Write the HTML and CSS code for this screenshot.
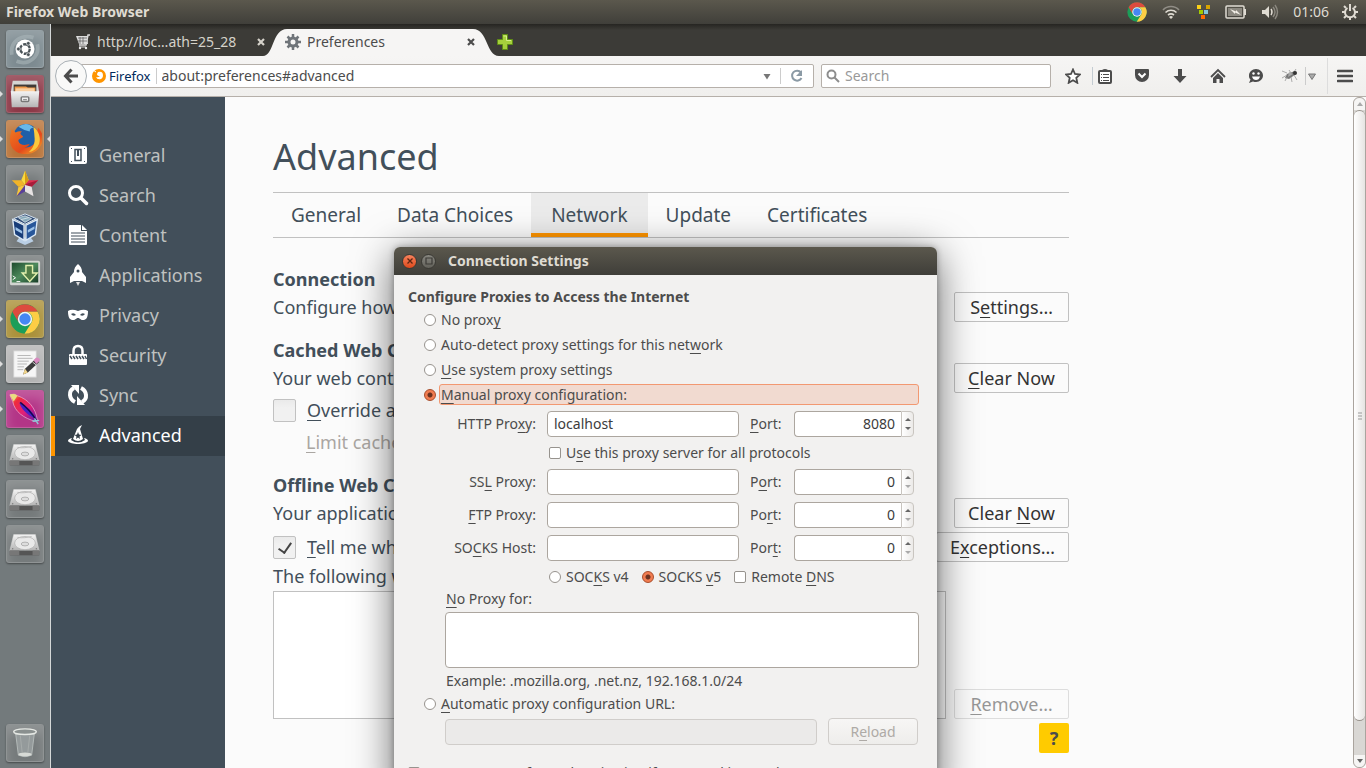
FILE: index.html
```html
<!DOCTYPE html>
<html lang="en">
<head>
<meta charset="utf-8">
<title>Preferences</title>
<link rel="stylesheet" href="styles.css">
</head>
<body>
<svg class="defs" aria-hidden="true">
  <defs>
    <linearGradient id="metal" x1="0" y1="0" x2="0" y2="1"><stop offset="0" stop-color="#f4f4f4"/><stop offset="1" stop-color="#b4b4b4"/></linearGradient>
    <linearGradient id="term" x1="0" y1="0" x2="1" y2="1"><stop offset="0" stop-color="#1d4a2c"/><stop offset=".5" stop-color="#4d8a5c"/><stop offset="1" stop-color="#173d25"/></linearGradient>
    <linearGradient id="plume" x1="0" y1="0" x2="1" y2="1"><stop offset="0" stop-color="#f0d060"/><stop offset=".25" stop-color="#ef2b3c"/><stop offset=".6" stop-color="#e0207a"/><stop offset="1" stop-color="#5a1aa8"/></linearGradient>
    <linearGradient id="foxfur" x1="0" y1="0" x2="1" y2="1"><stop offset="0" stop-color="#f07a20"/><stop offset=".6" stop-color="#e4491c"/><stop offset="1" stop-color="#f9b62b"/></linearGradient>
    <symbol id="chrome" viewBox="0 0 32 32">
      <circle cx="16" cy="16" r="15.500" fill="#1b9e59"/>
      <path d="M2.600 8.200A15.500 15.500 0 0 1 29.400 8.200H16A7.800 7.800 0 0 0 9.200 19.800z" fill="#dd4b3e"/>
      <path d="M29.400 8.200A15.500 15.500 0 0 1 15.500 31.500L22.800 19.900A7.800 7.800 0 0 0 16 8.200z" fill="#fdcd45"/>
      <circle cx="16" cy="16" r="7.600" fill="#f4f4f4"/><circle cx="16" cy="16" r="6" fill="#4587f3"/>
    </symbol>
    <symbol id="disk" viewBox="0 0 36 36">
      <path d="M6 8h23l4 17H2z" fill="url(#metal)" stroke="#d8d8d8" stroke-width=".5"/>
      <path d="M2 25h31v5H2z" fill="#555"/><path d="M2 25h10v5H2zM26 25h7v5h-7z" fill="#777"/>
      <ellipse cx="18" cy="17" rx="11" ry="7" fill="#e9e9e9" stroke="#aaa" stroke-width=".7"/>
      <ellipse cx="18" cy="18" rx="4" ry="2" fill="#ddd" stroke="#999" stroke-width=".7"/>
      <path d="M10 11c5 1 11 0 15-1" fill="none" stroke="#bbb"/>
      <circle cx="5" cy="23" r=".7" fill="#777"/><circle cx="30" cy="23" r=".7" fill="#777"/>
    </symbol>
  </defs>
</svg>
<div class="desktop">
  <header class="panel">
    <span class="panel-title">Firefox Web Browser</span>
    <div class="tray">
      <svg width="20" height="20"><use href="#chrome"/></svg>
      <svg width="20" height="16" viewBox="0 0 20 16" fill="none" stroke-width="1.600"><path d="M2 6a11 11 0 0 1 16 0" stroke="#918e86"/><path d="M4.500 8.500a8 8 0 0 1 11 0M7 11a5 5 0 0 1 6 0" stroke="#dfdbd2"/><path d="M8 13l2 2 2-2a3 3 0 0 0-4 0z" fill="#dfdbd2"/></svg>
      <svg width="16" height="16" viewBox="0 0 16 16"><path d="M2 1h4v4H2z" fill="#fcd116"/><path d="M11 1h4v4h-4z" fill="#d8a400"/><path d="M4 6h4v4H4z" fill="#a4cc00"/><path d="M9 6h4v4H9z" fill="#82c5d8"/><path d="M6 11h4v4H6z" fill="#ff6a00"/></svg>
      <svg width="22" height="14" viewBox="0 0 22 14"><rect x="1" y="1" width="18" height="12" rx="1" fill="none" stroke="#dfdbd2" stroke-width="1.500"/><path d="M3 3h14v8H3z" fill="#8b887f"/><path d="M20 4v6" stroke="#dfdbd2" stroke-width="2"/><path d="M5 4l6 2.500V5l5 5-6-2.500V9z" fill="#f2eee6"/></svg>
      <svg width="18" height="16" viewBox="0 0 18 16" fill="none"><path d="M1 6h3l4-4v12l-4-4H1z" fill="#dfdbd2"/><path d="M10 5q2 3 0 6" stroke="#dfdbd2" stroke-width="1.500"/><path d="M12 3q4 5 0 10M14 1q5 7 0 14" stroke="#8c8980" stroke-width="1.400"/></svg>
      <time class="clock">01:06</time>
      <svg width="18" height="18" viewBox="0 0 18 18" fill="none" stroke="#dfdbd2"><path d="M6.500 5a5 5 0 1 0 5 0" stroke-width="2"/><path d="M9 1v7" stroke-width="2"/><path d="M9 14v3M1 9h3M14 9h3M3 3l2 2M15 3l-2 2M3 15l2-2M15 15l-2-2" stroke-width="2"/></svg>
    </div>
  </header>

  <div class="workspace">
    <nav class="launcher" aria-label="Launcher">
      <button class="tile tile-dash" aria-label="Dash"><svg viewBox="0 0 36 36"><path d="M4 24C2 10 14 2 27 6M9 31c14 5 25-6 22-18" fill="none" stroke="#aab5b9" stroke-width="4" opacity=".6"/><circle cx="18" cy="18" r="10" fill="#fff"/><circle cx="18" cy="18" r="5" fill="none" stroke="#4a5358" stroke-width="2.500" stroke-dasharray="9 1.470"/><circle cx="11" cy="18" r="2" fill="#4a5358" stroke="#fff" stroke-width=".7"/><circle cx="21.500" cy="12" r="2" fill="#4a5358" stroke="#fff" stroke-width=".7"/><circle cx="21.500" cy="24" r="2" fill="#4a5358" stroke="#fff" stroke-width=".7"/></svg></button>
      <button class="tile tile-files running" aria-label="Files"><svg viewBox="0 0 36 36"><path d="M5 4h26l2 12H3z" fill="#d5d5d3"/><path d="M6 8h24v8H6z" fill="#3f3a36"/><path d="M7 10h12l2 1h8v6H7z" fill="#f09a4a"/><path d="M8 12h20v4H8z" fill="#fbd0a0"/><path d="M3 15h30l-1 17H4z" fill="url(#metal)"/><rect x="14" y="21" width="8" height="5" rx="1" fill="#eee" stroke="#777" stroke-width="1.500"/><path d="M16 24h4" stroke="#777"/></svg></button>
      <button class="tile tile-firefox running focused" aria-label="Firefox"><svg viewBox="0 0 36 36"><circle cx="19" cy="15" r="13" fill="#1f5fa8"/><path d="M11 5q9-6 16 1-4 0-4 4-6-1-12-5z" fill="#69b8e8"/><path d="M4 8c1 1 3 2 4 3q4-2 7-1c-3 2-2 3 1 5-1 3-5 2-5 5 1 5 8 5 12 3-2 4-6 4-6 4 9 1 13-5 12-12l3-9c6 6 6 15 2 20-3 5-9 8-15 8C9 34 2 28 2 19c0-4 1-7 2-11z" fill="url(#foxfur)"/><path d="M27 5c6 5 8 12 6 18-2 5-6 8-11 9 5-5 7-10 6-17 0-4-1-7-1-10z" fill="#fbc83c"/></svg></button>
      <button class="tile tile-gray" aria-label="Star"><svg viewBox="0 0 36 36"><path d="M18 4l4 10-4 5-4-5z" fill="#fad93c"/><path d="M18 4l4 10-4 5z" fill="#d49b15"/><path d="M32 14H22l-4 5 7 2z" fill="#e03050"/><path d="M32 14l-10 3-4 2 7 2z" fill="#a81c3a"/><path d="M27 31l-2-10-7-2v7z" fill="#e7e3e3"/><path d="M9 31l9-5v-7l-7 2z" fill="#59409a"/><path d="M4 14h10l4 5-7 2z" fill="#f1b428"/><path d="M9 31l2-10 7-2z" fill="#f6c93a"/></svg></button>
      <button class="tile tile-gray" aria-label="VirtualBox"><svg viewBox="0 0 36 36"><path d="M12 27h12l3 4-9 4-9-4z" fill="#b9cee4"/><path d="M18 2l12 5-12 6L6 7z" fill="#344f78" stroke="#dce9f5"/><path d="M11 6l7-2 7 3-7 4zM14 8l8-2" fill="#8ab" stroke="#fff" stroke-width=".6"/><path d="M5 8l12 6v16L7 24z" fill="#183d78" stroke="#dce9f5" stroke-width="1.500"/><path d="M31 8l-12 6v16l10-6z" fill="#28579a" stroke="#dce9f5" stroke-width="1.500"/><path d="M8 16l7 4v3l-7-4zM21 19l7-4v3l-7 4z" fill="#9ec4e9"/></svg></button>
      <button class="tile tile-gray" aria-label="Terminal"><svg viewBox="0 0 36 36"><rect x="2" y="4" width="32" height="26" rx="2" fill="#d2d4d0"/><path d="M4 6h28v21H4z" fill="url(#term)"/><path d="M5 20l3 2-3 2M9 26h4" fill="none" stroke="#fff"/><path d="M19 9h7v8h5l-8 9-8-9h4z" fill="#527d46" stroke="#e3f0ae" stroke-width="1.500"/></svg></button>
      <button class="tile tile-chrome running" aria-label="Chrome"><svg viewBox="0 0 36 36"><use href="#chrome" x="2" y="2" width="32" height="32"/></svg></button>
      <button class="tile tile-edit running" aria-label="Text Editor"><svg viewBox="0 0 36 36"><path d="M6 4h24v28H6z" fill="#f6f6f6" stroke="#ccc"/><path d="M10 9h14M10 12h16M10 15h12M10 18h10M10 21h7M10 24h6" stroke="#b5b5b5"/><path d="M16 29l2-6L30 12l3 4-12 11z" fill="#3c3c3c"/><path d="M27 14l3-3q3 0 4 3l-4 4z" fill="#d98ac0"/><path d="M16 29l2-6 3 4z" fill="#f1d58b"/><path d="M26 16l4 3" stroke="#ddd"/></svg></button>
      <button class="tile tile-feather running" aria-label="Feather"><svg viewBox="0 0 36 36"><path d="M2 3q5-2 8 1c12 4 19 13 21 25l-2 2C17 28 7 21 5 10z" fill="url(#plume)" stroke="#f2b9d8" stroke-width=".7"/><path d="M12 11c8 4 14 9 17 17C20 24 14 18 12 11z" fill="#4520c8"/><path d="M13 11c8 6 12 11 17 19" fill="none" stroke="#16064c" stroke-width="1.500"/><path d="M2 3q5-2 8 1l-4 6z" fill="#e9dc80"/><path d="M28 28l4 6M26 31l7-1" stroke="#8fc8d8" stroke-width="1.500"/></svg></button>
      <button class="tile tile-gray" aria-label="Volume 1"><svg><use href="#disk"/></svg></button>
      <button class="tile tile-gray" aria-label="Volume 2"><svg><use href="#disk"/></svg></button>
      <button class="tile tile-gray" aria-label="Volume 3"><svg><use href="#disk"/></svg></button>
      <button class="tile tile-gray tile-trash" aria-label="Trash"><svg viewBox="0 0 36 36"><path d="M8 7h20l-3 24q-7 3-14 0z" fill="#949a9b" stroke="#b5bbba"/><path d="M13 10l2 18M23 10l-2 18" stroke="#a7acab"/><ellipse cx="18" cy="30" rx="7" ry="2" fill="#d7dad6"/><ellipse cx="18" cy="6" rx="12" ry="3" fill="#8a908f" stroke="#e5e8e4" stroke-width="1.500"/></svg></button>
    </nav>

    <div class="browser">
      <div class="tabstrip">
        <div class="tab">
          <svg width="16" height="16" viewBox="0 0 16 16"><path d="M1 2h11l1 8H4z" fill="#ddd"/><path d="M15 1l-2 0-2 10H4" fill="none" stroke="#ddd" stroke-width="1.500"/><path d="M3 4h9M3 7h9M5 3v7M8 3v7" stroke="#555" stroke-width=".7"/><path d="M4 13h7" stroke="#ddd"/><circle cx="5" cy="14" r="1.200" fill="#eee"/><circle cx="11" cy="14" r="1.200" fill="#eee"/></svg>
          <span class="tab-label">http://loc…ath=25_28</span>
          <button class="tab-close" aria-label="Close tab"><svg width="8" height="8" viewBox="0 0 8 8"><path d="M1 1l6 6M7 1L1 7" stroke="currentColor" stroke-width="2.200"/></svg></button>
        </div>
        <div class="tab tab-active">
          <svg class="tab-shape" viewBox="0 0 236 29" preserveAspectRatio="none"><path d="M0 29C11 29 9 1 24 1H210C225 1 223 29 236 29z" fill="#f6f5f4"/></svg>
          <svg width="16" height="16" viewBox="0 0 16 16"><circle cx="8" cy="8" r="4" fill="none" stroke="#6f7479" stroke-width="3"/><path d="M8 0v3M8 13v3M0 8h3M13 8h3M2.500 2.500l2 2M11.500 11.500l2 2M13.500 2.500l-2 2M4.500 11.500l-2 2" stroke="#6f7479" stroke-width="2.500"/></svg>
          <span class="tab-label">Preferences</span>
          <button class="tab-close" aria-label="Close tab"><svg width="8" height="8" viewBox="0 0 8 8"><path d="M1 1l6 6M7 1L1 7" stroke="currentColor" stroke-width="2.200"/></svg></button>
        </div>
        <button class="new-tab" aria-label="New tab"><svg width="16" height="16" viewBox="0 0 16 16"><path d="M5.500 .5h5v5h5v5h-5v5h-5v-5h-5v-5h5z" fill="#a6d03c" stroke="#5f8d16"/><path d="M6.500 2h3v4.500H14" fill="none" stroke="#d5ef8a"/></svg></button>
      </div>

      <div class="toolbar">
        <button class="back" aria-label="Back"><svg width="16" height="16" viewBox="0 0 16 16" fill="none" stroke="#4c4c4c" stroke-width="3"><path d="M8.500 1.500L2.500 8l6 6.500M3 8h12"/></svg></button>
        <div class="urlbar">
          <svg width="14" height="14" viewBox="0 0 14 14"><circle cx="7" cy="7" r="7" fill="#ff9500"/><path d="M6 3q3-1 4.500 1Q12 8 9 10q-4 1-5-2 2 1 4-1-3 0-3-2z" fill="#fff"/><path d="M1 1l3 2" stroke="#fff"/></svg>
          <span class="identity">Firefox</span>
          <input class="url" type="text" aria-label="Address" value="about:preferences#advanced">
          <button class="icon-button url-drop" aria-label="Show history"><svg width="8" height="7" viewBox="0 0 8 7"><path d="M.5 1h7L4 6.500z" fill="#777"/></svg></button>
          <button class="icon-button reload" aria-label="Reload page"><svg width="14" height="14" viewBox="0 0 14 14"><path d="M11 3.500A5 5 0 1 0 11.500 9" fill="none" stroke="#8b9aa5" stroke-width="2"/><path d="M12 1v6H6z" fill="#8b9aa5"/></svg></button>
        </div>
        <label class="searchbar">
          <svg width="14" height="14" viewBox="0 0 14 14" fill="none" stroke="#8d8d8d" stroke-width="2"><circle cx="5.500" cy="5.500" r="4"/><path d="M8.500 8.500L13 13"/></svg>
          <input type="text" placeholder="Search" aria-label="Search the web">
        </label>
        <div class="actions">
          <button class="icon-button" aria-label="Bookmark"><svg width="16" height="16" viewBox="0 0 16 16"><path d="M8 1.500l2 4.500 5 .5-3.700 3.300 1 5L8 12.300l-4.300 2.500 1-5L1 6.500 6 6z" fill="#fff" stroke="#4c4c4c" stroke-width="1.800"/></svg></button>
          <button class="icon-button list" aria-label="Bookmarks list"><svg width="14" height="16" viewBox="0 0 14 16"><rect x="1" y="3" width="12" height="12" rx="1" fill="#fff" stroke="#4c4c4c" stroke-width="2"/><path d="M4 3q0-2 3-2t3 2v1H4z" fill="#4c4c4c"/><path d="M3 6.500h1M5 6.500h6M3 9.500h1M5 9.500h6M3 12.500h1M5 12.500h6" stroke="#4c4c4c"/></svg></button>
          <button class="icon-button" aria-label="Pocket"><svg width="16" height="16" viewBox="0 0 16 16"><path d="M2 1h12q1 0 1 1v5a7 7 0 0 1-14 0V2q0-1 1-1z" fill="#4c4c4c"/><path d="M4.500 5.500L8 9l3.500-3.500" fill="none" stroke="#fff" stroke-width="2"/></svg></button>
          <button class="icon-button" aria-label="Downloads"><svg width="14" height="16" viewBox="0 0 14 16"><path d="M5 1h4v7h4.500L7 15 .5 8H5z" fill="#4c4c4c"/></svg></button>
          <button class="icon-button" aria-label="Home"><svg width="16" height="16" viewBox="0 0 16 16"><path d="M1 9l7-7 7 7" fill="none" stroke="#4c4c4c" stroke-width="1.800"/><path d="M3 10l5-5 5 5v5H9.500v-4h-3v4H3z" fill="#4c4c4c"/></svg></button>
          <button class="icon-button" aria-label="Chat"><svg width="16" height="16" viewBox="0 0 16 16"><path d="M8 1c4 0 7 3 7 6.500S12 14 8 14c-1 0-2 0-3-.5L1 15l1.500-3.500C1 10 1 9 1 7.500 1 4 4 1 8 1z" fill="#4c4c4c"/><circle cx="5.500" cy="5.500" r="1.200" fill="#fff"/><circle cx="10.500" cy="5.500" r="1.200" fill="#fff"/><path d="M4 8.500h8q-1 3.500-4 3.500T4 8.500z" fill="#fff"/></svg></button>
          <button class="icon-button fly" aria-label="Firebug"><svg width="16" height="14" viewBox="0 0 16 14"><path d="M5 5l8-3 1 3-7 5-4-1z" fill="#777"/><path d="M5 4L0 2M5 6L0 9M5 8L3 12M9 8l1 5M12 6l3 5M9 4L7 1M12 3l2-3" stroke="#999" stroke-width=".8"/><path d="M7 3l4 2-5 3z" fill="#aaa"/><circle cx="13" cy="4" r="2" fill="#333"/></svg></button>
          <button class="icon-button fly-drop" aria-label="Firebug options"><svg width="8" height="7" viewBox="0 0 8 7"><path d="M.5 1h7L4 6.500z" fill="#aaa" stroke="#777"/></svg></button>
          <button class="icon-button menu" aria-label="Menu"><svg width="16" height="14" viewBox="0 0 16 14"><path d="M1 2h14M1 7h14M1 12h14" stroke="#4c4c4c" stroke-width="2.600" stroke-linecap="round"/></svg></button>
        </div>
      </div>

      <div class="page">
        <nav class="sidebar" aria-label="Categories">
          <a href="#general"><svg viewBox="0 0 20 20"><rect x="1" y="1" width="18" height="18" rx="2" fill="#fff"/><path d="M7 4.500h6v11H7z" fill="none" stroke="#424f5a" stroke-width="1.500"/><path d="M9 5h2v6H9z" fill="#424f5a"/><path d="M3 3h1v1H3zM16 3h1v1h-1zM3 16h1v1H3zM16 16h1v1h-1z" fill="#424f5a"/></svg>General</a>
          <a href="#search"><svg viewBox="0 0 20 20" fill="none" stroke="#fff"><circle cx="8" cy="8" r="6.500" stroke-width="3"/><path d="M13 13l5.500 5.500" stroke-width="3.500" stroke-linecap="round"/></svg>Search</a>
          <a href="#content"><svg viewBox="0 0 20 20"><path d="M1 1q0-1 1-1h11v6h6v13q0 1-1 1H2q-1 0-1-1z" fill="#fff"/><path d="M14 0l5 5h-5z" fill="#fff"/><path d="M3 8h14M3 11h14M3 14h14M3 17h14" stroke="#424f5a" stroke-width="1.200"/></svg>Content</a>
          <a href="#applications"><svg viewBox="0 0 20 20"><path d="M10-1q4 3 4 8l4 5v6l-4-2H6l-4 2v-6l4-5q0-5 4-8z" fill="#fff"/><circle cx="10" cy="6" r="1.500" fill="#424f5a"/><path d="M8 17h4l-2 4z" fill="#ddd"/></svg>Applications</a>
          <a href="#privacy"><svg viewBox="0 0 20 20"><path d="M0 6q3-2 7-1l3 1 3-1q4-1 7 1c0 7-2 9-5 9-3 0-3-2-5-2s-2 2-5 2C2 15 0 13 0 6z" fill="#fff"/><path d="M3 9q3-2 5 1-3 2-5-1zM17 9q-3-2-5 1 3 2 5-1z" fill="#424f5a"/></svg>Privacy</a>
          <a href="#security"><svg viewBox="0 0 20 20"><path d="M5.500 9V6q0-5 4.500-5t4.500 5v3" fill="none" stroke="#fff" stroke-width="2.500"/><rect x="1" y="9" width="18" height="11" rx="1" fill="#fff"/><path d="M2 11l2 3M5 11l2 3M8 11l2 3M11 11l2 3M14 11l2 3M17 11l1.500 3" stroke="#424f5a" stroke-width="1.500"/></svg>Security</a>
          <a href="#sync"><svg viewBox="0 0 20 20"><path d="M7 17C1 14 0 6 6 3M13 3c6 3 7 11 1 14" fill="none" stroke="#fff" stroke-width="4"/><path d="M3 0h8v9zM17 20H9v-9z" fill="#fff"/></svg>Sync</a>
          <a href="#advanced" class="current" aria-current="page"><svg viewBox="0 0 20 20"><path d="M14 0l-2 4 3 10q-5 4-10 0L9 4q2-3 5-4z" fill="#fff"/><path d="M4 13Q0 14 0 16c2 4 18 4 20 0q0-2-4-3l1 2q-7 5-14 0z" fill="#fff"/><path d="M10 7l1 2.500 2.500.5-2 1.500.5 2.500-2-1.500L8 14l.5-2.500-2-1.500 2.500-.5z" fill="#343f48"/></svg>Advanced</a>
        </nav>

        <main class="prefs">
          <h1>Advanced</h1>
          <nav class="subtabs" aria-label="Advanced sections">
            <a href="#a-general">General</a><a href="#a-data">Data Choices</a><a href="#a-network" class="selected">Network</a><a href="#a-update">Update</a><a href="#a-certificates">Certificates</a>
          </nav>
          <section>
            <h2>Connection</h2>
            <div class="row"><span>Configure how</span><button class="pref-button">S<u>e</u>ttings…</button></div>
          </section>
          <section>
            <h2>Cached Web Content</h2>
            <div class="row"><span>Your web content</span><button class="pref-button"><u>C</u>lear Now</button></div>
            <label class="check-row"><input type="checkbox" class="big-check"><span><u>O</u>verride auto</span></label>
            <div class="limit"><u>L</u>imit cache</div>
          </section>
          <section>
            <h2>Offline Web Content</h2>
            <div class="row"><span>Your application</span><button class="pref-button">Clear <u>N</u>ow</button></div>
            <div class="row tell"><label class="check-row"><input type="checkbox" class="big-check" checked><span><u>T</u>ell me when</span></label><button class="pref-button wide">E<u>x</u>ceptions…</button></div>
            <div class="following">The following web</div>
            <div class="sites"><div class="sites-list"></div><button class="pref-button" disabled><u>R</u>emove…</button></div>
          </section>
          <button class="help" aria-label="Help">?</button>
        </main>

        <div class="scrollbar" aria-hidden="true">
          <span class="arrow"><svg width="6" height="4"><path d="M0 4l3-4 3 4z" fill="#aaa"/></svg></span>
          <span class="thumb"><svg width="4" height="8"><path d="M0 1h4M0 4h4M0 7h4" stroke="#999"/></svg></span>
          <span class="arrow"><svg width="6" height="4"><path d="M0 0l3 4 3-4z" fill="#666"/></svg></span>
        </div>
      </div>
    </div>
  </div>

  <div class="dialog" role="dialog" aria-labelledby="dialog-title">
    <div class="titlebar">
      <button class="win-button close" aria-label="Close"><svg width="8" height="8" viewBox="0 0 8 8"><path d="M1.500 1.500l5 5M6.500 1.500l-5 5" stroke="#5c2513" stroke-width="1.300"/></svg></button>
      <button class="win-button" aria-label="Maximize"><svg width="8" height="8" viewBox="0 0 8 8"><path d="M1 1h6v6H1z" fill="none" stroke="#3c3b37" stroke-width="1.200"/></svg></button>
      <span id="dialog-title">Connection Settings</span>
    </div>
    <form class="dialog-body">
      <h3>Configure Proxies to Access the Internet</h3>
      <label class="option"><input type="radio" name="mode"><span>No prox<u>y</u></span></label>
      <label class="option"><input type="radio" name="mode"><span>Auto-detect proxy settings for this net<u>w</u>ork</span></label>
      <label class="option"><input type="radio" name="mode"><span><u>U</u>se system proxy settings</span></label>
      <label class="option focus"><input type="radio" name="mode" checked><span><u>M</u>anual proxy configuration:</span></label>

      <div class="proxy"><label class="host-label" for="http">HTTP Pro<u>x</u>y:</label><input class="field" id="http" type="text" value="localhost"><label class="port-label" for="http-port"><u>P</u>ort:</label>
        <div class="spinner"><input id="http-port" type="text" inputmode="numeric" value="8080"><span class="steps"><button type="button" aria-label="Increase"></button><button type="button" class="down" aria-label="Decrease"></button></span></div></div>
      <label class="same"><input type="checkbox"><span>U<u>s</u>e this proxy server for all protocols</span></label>
      <div class="proxy"><label class="host-label" for="ssl">SS<u>L</u> Proxy:</label><input class="field" id="ssl" type="text"><label class="port-label" for="ssl-port">P<u>o</u>rt:</label>
        <div class="spinner"><input id="ssl-port" type="text" inputmode="numeric" value="0"><span class="steps"><button type="button" aria-label="Increase"></button><button type="button" class="down off" aria-label="Decrease"></button></span></div></div>
      <div class="proxy"><label class="host-label" for="ftp"><u>F</u>TP Proxy:</label><input class="field" id="ftp" type="text"><label class="port-label" for="ftp-port">Po<u>r</u>t:</label>
        <div class="spinner"><input id="ftp-port" type="text" inputmode="numeric" value="0"><span class="steps"><button type="button" aria-label="Increase"></button><button type="button" class="down off" aria-label="Decrease"></button></span></div></div>
      <div class="proxy"><label class="host-label" for="socks">SO<u>C</u>KS Host:</label><input class="field" id="socks" type="text"><label class="port-label" for="socks-port">Por<u>t</u>:</label>
        <div class="spinner"><input id="socks-port" type="text" inputmode="numeric" value="0"><span class="steps"><button type="button" aria-label="Increase"></button><button type="button" class="down off" aria-label="Decrease"></button></span></div></div>
      <div class="versions">
        <label><input type="radio" name="socks-version"><span>SOC<u>K</u>S v4</span></label>
        <label><input type="radio" name="socks-version" checked><span>SOCKS <u>v</u>5</span></label>
        <label><input type="checkbox"><span>Remote <u>D</u>NS</span></label>
      </div>
      <div class="bypass">
        <label for="bypass"><u>N</u>o Proxy for:</label>
        <textarea id="bypass"></textarea>
        <p>Example: .mozilla.org, .net.nz, 192.168.1.0/24</p>
      </div>
      <label class="option auto"><input type="radio" name="mode"><span><u>A</u>utomatic proxy configuration URL:</span></label>
      <div class="auto-row"><input class="field" type="text" aria-label="Automatic proxy configuration URL" disabled><button type="button" class="reload-pac" disabled>R<u>e</u>load</button></div>
      <label class="prompt"><input type="checkbox"><span>Do not prompt for authentication if password is saved</span></label>
    </form>
  </div>
</div>
</body>
</html>
```
FILE: styles.css
```css
* { box-sizing: border-box; }
body {
  margin: 0;
  font: 14px/20px "Noto Sans", "Open Sans", sans-serif;
  color: #4c4c4c;
}
button, input, textarea { font: inherit; color: inherit; margin: 0; }
button { padding: 0; border: 0; background: none; }
input, textarea { outline: 0; }
svg { display: block; flex: none; }
a { color: inherit; text-decoration: none; }
u { text-decoration-thickness: 1px; text-underline-offset: 3px; text-decoration-skip-ink: none; }
h1, h2, h3, p { margin: 0; }
.defs { position: absolute; width: 0; height: 0; }

.desktop {
  position: relative;
  display: flex;
  flex-direction: column;
  height: 100vh;
  overflow: hidden;
}

/* Top panel */
.panel {
  display: flex;
  align-items: center;
  justify-content: space-between;
  height: 24px;
  flex: none;
  padding: 0 7px 0 6px;
  color: #dfdbd2;
  background: linear-gradient(#5b584d, #403f3a);
}
.panel-title { font-weight: 700; }
.tray { display: flex; align-items: center; gap: 14px; }
.clock { margin-right: -2px; }

.workspace { display: flex; flex: 1; min-height: 0; }

/* Launcher */
.launcher {
  display: flex;
  flex-direction: column;
  align-items: center;
  gap: 7px;
  flex: none;
  width: 51px;
  padding: 6px 0;
  background: #737a7c;
  border-right: 1px solid #d5d8d8;
}
.tile {
  position: relative;
  width: 38px;
  height: 38px;
  padding: 1px;
  border: 1px solid rgba(255, 255, 255, .2);
  border-radius: 3px;
  box-shadow: 0 1px 2px rgba(0, 0, 0, .4), inset 0 8px 12px rgba(255, 255, 255, .2);
}
.tile svg { width: 34px; height: 34px; }
.tile-dash { background: #7c8a90; }
.tile-files { background: #8c3746; }
.tile-firefox { background: #b97338; }
.tile-gray { background: #757a7b; }
.tile-chrome { background: #ab913a; }
.tile-edit { background: #b4b4b4; }
.tile-feather { background: #b33587; }
.tile-trash { margin-top: auto; }
.running::before, .focused::after {
  content: "";
  position: absolute;
  top: 15px;
  border: 3px solid transparent;
}
.running::before { left: -7px; border-left-color: #ddd; }
.focused::after { right: -7px; border-right-color: #ddd; }

.browser { display: flex; flex-direction: column; flex: 1; min-width: 0; }

/* Tabs */
.tabstrip {
  display: flex;
  align-items: stretch;
  height: 32px;
  flex: none;
  padding: 4px 0 0 24px;
  background: linear-gradient(#262522, #3c3b37 6px);
}
.tab {
  position: relative;
  display: flex;
  align-items: center;
  gap: 6px;
  width: 190px;
  color: #d5d2ca;
}
.tab-label { flex: 1; white-space: nowrap; }
.tab-close { color: inherit; padding: 0; }
.tab-active { width: 236px; margin-left: -2px; padding: 0 24px 0 22px; color: #4c4c4c; }
.tab-active > * { position: relative; }
.tab-active .tab-shape { position: absolute; inset: 0; width: 100%; height: 100%; }
.new-tab { margin-left: -2px; padding: 0; width: 16px; }

/* Navigation toolbar */
.toolbar {
  display: flex;
  align-items: center;
  height: 41px;
  flex: none;
  padding: 0 4px;
  background: linear-gradient(#f6f5f4, #f0efed);
  border-bottom: 1px solid #b6b0aa;
}
.back {
  position: relative;
  display: flex;
  align-items: center;
  justify-content: center;
  width: 32px;
  height: 32px;
  border: 1px solid #a9b0b5;
  border-radius: 50%;
  background: #f9f9f8;
}
.urlbar, .searchbar {
  display: flex;
  align-items: center;
  height: 24px;
  background: #fff;
  border: 1px solid #b6b0aa;
  border-radius: 2px;
}
.urlbar { flex: 1; min-width: 0; margin: 0 7px 0 -10px; padding-left: 14px; }
.identity {
  margin-left: 3px;
  padding-right: 5px;
  font-size: 13px;
  line-height: 16px;
  color: #00295a;
  border-right: 1px solid #ccc;
}
.url { flex: 1; min-width: 0; height: 20px; padding: 0 5px; border: 0; background: none; }
.icon-button { display: flex; align-items: center; justify-content: center; width: 38px; height: 18px; }
.url-drop { width: 26px; }
.reload { width: 33px; height: 16px; border-left: 1px solid #ccc; }
.searchbar { width: 230px; padding-left: 4px; gap: 5px; }
.searchbar input { flex: 1; min-width: 0; height: 20px; padding: 0; border: 0; background: none; }
.searchbar input::placeholder { color: #999; opacity: 1; }
.actions { display: flex; align-items: center; margin-left: 3px; }
.list { width: 24px; margin-right: 7px; border-left: 1px solid #c4ccd2; }
.fly { width: 31px; border-right: 1px solid #ccc; }
.fly-drop { width: 11px; }
.menu { width: 35px; height: 36px; margin-left: 10px; border-left: 1px solid #ddd; }

/* Preferences page */
.page { display: flex; flex: 1; min-height: 0; background: #fbfbfb; }
.sidebar {
  width: 174px;
  flex: none;
  padding-top: 39px;
  background: #424f5a;
  color: #bfc1c0;
  font-size: 18px;
}
.sidebar a {
  display: flex;
  align-items: center;
  gap: 11px;
  height: 40px;
  padding: 0 0 2px 17px;
}
.sidebar svg { width: 20px; height: 20px; overflow: visible; }
.sidebar .current { padding-left: 13px; color: #fff; background: #343f48; border-left: 4px solid #ff9500; }

.prefs {
  flex: 1;
  min-width: 0;
  max-width: 844px;
  margin-right: auto;
  padding: 36px 0 0 48px;
  overflow: hidden;
  color: #424f5a;
  font-size: 18px;
}
h1 { height: 59px; font-size: 36px; line-height: 48px; font-weight: 400; }
.subtabs {
  display: flex;
  height: 46px;
  margin-bottom: 29px;
  border: solid #c1c1c1;
  border-width: 1px 0;
  font-size: 19px;
}
.subtabs a { padding: 0 18px; line-height: 44px; }
.subtabs .selected { padding: 0 20px; background: #ebebeb; border-bottom: 4px solid #ff9500; }
section { margin-bottom: 16px; white-space: nowrap; }
h2 { font-size: 18px; line-height: 25px; font-weight: 700; }
.row { display: flex; justify-content: space-between; align-items: center; height: 30px; }
.pref-button {
  flex: none;
  min-width: 115px;
  height: 30px;
  padding: 0 9px;
  font-size: 18px;
  line-height: 28px;
  color: #333;
  background: #fbfbfb;
  border: 1px solid #c1c1c1;
  border-radius: 2px;
}
.pref-button.wide { min-width: 133px; }
.pref-button:disabled { opacity: .5; }
.check-row { display: flex; align-items: center; gap: 11px; height: 34px; }
.big-check {
  appearance: none;
  width: 23px;
  height: 23px;
  border: 1px solid #c1c1c1;
  border-radius: 2px;
  background: linear-gradient(#eaeaea, #f1f1f1 8px);
}
.big-check:checked::before {
  content: "";
  display: block;
  width: 6px;
  height: 11px;
  margin: 3px 0 0 7px;
  border: solid #444;
  border-width: 0 2px 2px 0;
  transform: rotate(35deg);
}
.limit { padding-left: 33px; line-height: 30px; color: #aaa6a2; }
.tell { margin-top: 4px; }
.following { line-height: 29px; }
.sites { display: flex; align-items: flex-end; gap: 8px; }
.sites-list { flex: 1; height: 128px; border: 1px solid #c1c1c1; background: #fff; }
section:last-of-type { margin-bottom: 4px; }
.help {
  display: block;
  width: 30px;
  height: 30px;
  margin-left: auto;
  border-radius: 2px;
  background: #ffcb00;
  color: #4c4c4c;
  font-weight: 700;
}

.scrollbar {
  display: flex;
  flex-direction: column;
  width: 13px;
  flex: none;
  border: 1px solid #aaa49e;
  border-radius: 6px;
  background: #d9d7d4;
}
.arrow, .thumb { display: flex; align-items: center; justify-content: center; background: #f6f5f4; }
.arrow { height: 12px; border-radius: 6px 6px 0 0; }
.arrow:last-child { border-radius: 0 0 6px 6px; }
.thumb {
  flex: 1;
  margin-bottom: 34px;
  border: solid #99938d;
  border-width: 1px 0;
  border-radius: 6px;
  background: linear-gradient(90deg, #fff, #e6e4e2);
}

/* Dialog window */
.dialog {
  position: absolute;
  left: 394px;
  top: 247px;
  width: 543px;
  border-radius: 6px 6px 0 0;
  background: #f2f1f0;
  box-shadow: 0 8px 40px rgba(0, 0, 0, .6), 0 0 6px rgba(0, 0, 0, .3);
}
.titlebar {
  display: flex;
  align-items: center;
  gap: 4px;
  height: 28px;
  padding-left: 8px;
  border-radius: 6px 6px 0 0;
  background: linear-gradient(#5b584d, #3f3e39);
  color: #dfdbd2;
  font-weight: 700;
}
.titlebar span { margin-left: 8px; }
.win-button {
  display: flex;
  align-items: center;
  justify-content: center;
  width: 15px;
  height: 15px;
  border: 1px solid #3a3934;
  border-radius: 50%;
  background: linear-gradient(#888780, #62615a);
}
.close { background: linear-gradient(#f7825c, #df4a1c); }
.dialog-body { padding: 11px 18px 14px 14px; }
h3 { font-size: 14px; line-height: 21px; font-weight: 700; }
.dialog input[type="radio"], .dialog input[type="checkbox"] {
  appearance: none;
  flex: none;
  width: 12px;
  height: 12px;
  border: 1px solid #97938e;
  border-radius: 50%;
  background: #fff;
}
.dialog input[type="checkbox"] { border-radius: 2px; }
.dialog input[type="radio"]:checked {
  border-color: #a84c2a;
  background: radial-gradient(circle, #6b3220 2px, #f17c50 3px);
}
.dialog label { white-space: nowrap; }
.option { display: flex; align-items: center; height: 25px; padding-left: 16px; gap: 3px; }
.option span { flex: 1; border: 1px solid transparent; padding-left: 1px; line-height: 19px; }
.focus span { border-color: #f29871; border-radius: 3px; background: #f1dad0; }
.proxy {
  display: grid;
  grid-template-columns: 128px 192px 33px 120px;
  align-items: center;
  height: 33px;
  column-gap: 11px;
}
.host-label { text-align: right; }
.field, .spinner input, textarea {
  width: 100%;
  height: 26px;
  padding: 0 6px;
  border: 1px solid #aca69f;
  border-radius: 4px;
  background: #fff;
  color: #3c3c3c;
}
.spinner { display: flex; }
.spinner input { flex: 1; min-width: 0; border-right: 0; border-radius: 4px 0 0 4px; text-align: right; }
.steps {
  display: flex;
  flex-direction: column;
  justify-content: space-evenly;
  align-items: center;
  width: 13px;
  height: 26px;
  border: 1px solid #c9c5c0;
  border-radius: 0 4px 4px 0;
  background: linear-gradient(90deg, #fff, #eceae8);
}
.steps button { border: solid transparent; border-width: 0 3px 3px; border-bottom-color: #666; }
.steps .down { border-width: 3px 3px 0; border-top-color: #666; }
.steps .off { border-top-color: #aaa; }
.same { display: flex; align-items: center; gap: 5px; height: 25px; padding-left: 141px; }
.versions { display: flex; gap: 13px; height: 25px; padding-left: 141px; }
.versions label { display: flex; align-items: center; gap: 5px; }
.bypass { padding-left: 37px; }
.bypass label { display: block; padding-left: 1px; }
textarea { display: block; height: 56px; margin-top: 3px; resize: none; }
.bypass p { padding-left: 1px; line-height: 26px; }
.auto { height: 19px; }
.auto-row { display: flex; align-items: center; gap: 11px; margin: 5px 1px 18px 0; padding-left: 37px; }
.auto-row .field { flex: 1; background: #ebeae9; border-color: #d0cdca; }
.reload-pac {
  width: 90px;
  height: 27px;
  border: 1px solid #d0cdca;
  border-radius: 4px;
  background: linear-gradient(#f7f6f5, #eeedeb);
  color: #aeaaa6;
}
.prompt { display: flex; align-items: center; gap: 5px; }
```
